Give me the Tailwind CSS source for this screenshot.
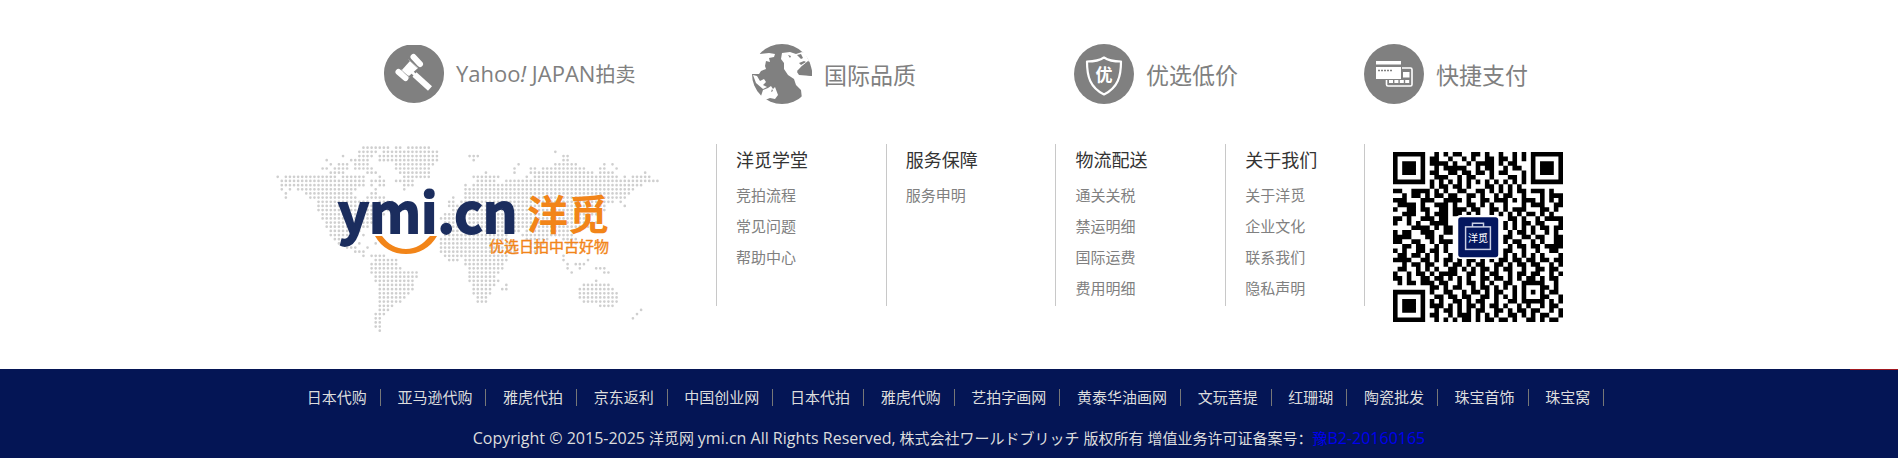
<!DOCTYPE html>
<html lang="zh-CN">
<head>
<meta charset="utf-8">
<title>ymi.cn 洋觅</title>
<script src="https://cdn.jsdelivr.net/npm/@tailwindcss/browser@4"></script>
</head>
<body class="min-h-screen bg-white font-['Open_Sans','Noto_Sans_CJK_SC',sans-serif] text-[15px]">
<footer class="flex min-h-screen flex-col">

  <ul class="mx-auto grid w-full max-w-[1350px] grid-cols-[368fr_322fr_290fr_260fr] pt-11 pl-[110px] text-[23px] leading-[30px] text-[#808080]">
    <li class="flex items-center gap-3">
      <svg class="size-[60px] shrink-0" viewBox="0 0 60 60" aria-hidden="true">
        <path d="M23 1h14A30 29 0 0 1 60 30 30 29 0 0 1 30 59 30 29 0 0 1 0 30 30 29 0 0 1 23 1z" fill="#808080"/>
        <path d="M26 17l8 7-9 8-8-5z" fill="#fff"/>
        <path d="M29.500 13l6.500 7M14.500 28l7 6" stroke="#fff" stroke-width="6" stroke-linecap="round"/>
        <path d="M27 27l4.500 4.500" stroke="#fff" stroke-width="3"/>
        <path d="M30.500 30.500L46 44.500" stroke="#fff" stroke-width="6"/>
        <path d="M24.500 15.500l8.500 8M17 25.500l8.500 8" stroke="#b5b5b5" stroke-width=".8"/>
      </svg>
      <span class="text-xl leading-[30px]"><span class="text-[22px]">Yahoo<i>!</i> JAPAN</span>拍卖</span>
    </li>
    <li class="flex items-center gap-3">
      <svg class="size-[60px] shrink-0" viewBox="0 0 60 60" aria-hidden="true">
        <circle cx="30" cy="30" r="30" fill="#808080"/>
        <path fill="#fff" d="M-1 5L8 10l9-1 6 1-1 3-5 1 1 4-4-1-1 5 1 3-5 2-2 3H0l-2-2z"/>
        <path fill="#fff" d="M30 9l8-1 6 2 6-2 3 1 4 8-7 5-5 6 2 3 13 1 1 8-5 12-6 3-1-9-5-5-2-6-6-4-4-6v-6l-3-4z"/>
        <path fill="#808080" d="M56 17l4 10v5l-11-2-4-3 4-4z"/>
        <path fill="#fff" d="M1 31l4 1 3 5 4-2 2 3-3 3 4 2-4 2-7-6zM9 52l2-6 5-2 3-2 2 3 2-2 3 8-3 4-5-1-5 2-4 3z"/>
        <path fill="#808080" d="M45 11l4-1 2 4-2 1zM47 19l5-2 2 1-5 3zM36 11l3 1-1 2zM20 45l1 2-2 1z"/>
      </svg>
      <span class="pt-0.5">国际品质</span>
    </li>
    <li class="flex items-center gap-3">
      <svg class="size-[60px] shrink-0" viewBox="0 0 60 60" aria-hidden="true">
        <circle cx="30" cy="30" r="30" fill="#808080"/>
        <path d="M30 13.500c-5 3.500-11 4-17 4 0 15 3 26 17 33 14-7 17-18 17-33-6 0-12-.5-17-4z" fill="none" stroke="#fff" stroke-width="2.200" stroke-linejoin="round"/>
        <text x="21.500" y="36.500" font-size="17" font-weight="700" fill="#fff" font-family="Noto Sans CJK SC">优</text>
      </svg>
      <span class="pt-0.5">优选低价</span>
    </li>
    <li class="flex items-center gap-3">
      <svg class="size-[60px] shrink-0" viewBox="0 0 60 60" aria-hidden="true">
        <circle cx="30" cy="30" r="30" fill="#808080"/>
        <rect x="22.500" y="24" width="25.500" height="18" rx="1.500" fill="none" stroke="#fff" stroke-width="1.600"/>
        <rect x="39" y="28" width="6.500" height="5.500" fill="#fff"/>
        <path d="M25 37.500h21" stroke="#fff" stroke-width="3" stroke-dasharray="4 1.400"/>
        <path d="M11 16h27v20H11z" fill="#808080"/>
        <path d="M12 17h25v3.500H12zM12 23h25v12H12z" fill="#fff"/>
        <path d="M14 26.500h14" stroke="#808080" stroke-width="1.400" stroke-dasharray="2 1"/>
      </svg>
      <span class="pt-0.5">快捷支付</span>
    </li>
  </ul>

  <div class="mx-auto mt-10 mb-8 grid w-full max-w-[1350px] grid-cols-[442fr_649fr_259fr] items-start">
    <div>
      <svg class="w-full max-w-[386px]" viewBox="0 0 386 193" role="img" aria-label="ymi.cn 洋觅 优选日拍中古好物">
        <g transform="translate(3.700 3.700) scale(4.083 4.160)">
          <path id="worldDots" fill="none" stroke="#cfcfcf" stroke-width=".66" stroke-linecap="round" stroke-dasharray="0 1"/>
        </g>
        <g font-family="Noto Sans CJK SC" font-weight="700">
          <text x="64" y="89" font-size="54" fill="#1b2d5e" stroke="#1b2d5e" stroke-width="1.800">ymi.cn</text>
          <text x="253" y="86" font-size="41" fill="#f28519">洋觅</text>
          <text x="215" y="108" font-size="15" fill="#f28519" font-weight="400" stroke="#f28519" stroke-width=".4">优选日拍中古好物</text>
        </g>
        <path d="M101 92h7c6 8 14 13 24 13s17-5 24-13h7c-7 12-18 18-31 18s-24-6-31-18z" fill="#f28519"/>
      </svg>
    </div>

    <nav class="grid grid-cols-[170fr_170fr_170fr_139fr] border-r border-[#c8c8c8] leading-[31px] text-[#808080]" aria-label="帮助">
      <section class="border-l border-[#c8c8c8] pb-0.5 pl-[19px]">
        <h2 class="mb-1 text-lg leading-8 text-[#333]">洋觅学堂</h2>
        <ul><li><a href="#">竞拍流程</a></li><li><a href="#">常见问题</a></li><li><a href="#">帮助中心</a></li></ul>
      </section>
      <section class="border-l border-[#c8c8c8] pb-0.5 pl-[19px]">
        <h2 class="mb-1 text-lg leading-8 text-[#333]">服务保障</h2>
        <ul><li><a href="#">服务申明</a></li></ul>
      </section>
      <section class="border-l border-[#c8c8c8] pb-0.5 pl-[19px]">
        <h2 class="mb-1 text-lg leading-8 text-[#333]">物流配送</h2>
        <ul><li><a href="#">通关关税</a></li><li><a href="#">禁运明细</a></li><li><a href="#">国际运费</a></li><li><a href="#">费用明细</a></li></ul>
      </section>
      <section class="border-l border-[#c8c8c8] pb-0.5 pl-[19px]">
        <h2 class="mb-1 text-lg leading-8 text-[#333]">关于我们</h2>
        <ul><li><a href="#">关于洋觅</a></li><li><a href="#">企业文化</a></li><li><a href="#">联系我们</a></li><li><a href="#">隐私声明</a></li></ul>
      </section>
    </nav>

    <div class="pt-2 pl-7">
      <svg class="w-full max-w-[170px]" viewBox="0 0 37 37" role="img" aria-label="洋觅二维码">
        <path id="qrModules" fill="#000"/>
        <rect x="13.700" y="13.700" width="9.600" height="9.600" rx="1" fill="#fff"/>
        <rect x="14.200" y="14.200" width="8.700" height="8.700" rx=".6" fill="#04175f"/>
        <g fill="none" stroke="#c9cfe4" stroke-width=".32">
          <rect x="15.800" y="16.300" width="5.400" height="4.900"/>
          <path d="M17.300 16.300v-.8h2.400v.8"/>
        </g>
        <text x="16.300" y="19.600" font-size="2.200" fill="#fff" font-family="Noto Sans CJK SC">洋觅</text>
      </svg>
    </div>
  </div>

  <div class="relative mt-auto bg-[#041555] pt-5 pb-2 text-center text-[#ddd]">
    <span class="absolute top-0 right-0 h-px w-12 bg-[#a01820]"></span>
    <ul class="px-4 text-sm leading-[17px] [&>li]:inline-block [&>li]:border-r [&>li]:border-[#777] [&>li]:px-[13px] [&>li]:text-[15px] [&>li]:leading-[17px]">
      <li><a href="#">日本代购</a></li>
      <li><a href="#">亚马逊代购</a></li>
      <li><a href="#">雅虎代拍</a></li>
      <li><a href="#">京东返利</a></li>
      <li><a href="#">中国创业网</a></li>
      <li><a href="#">日本代拍</a></li>
      <li><a href="#">雅虎代购</a></li>
      <li><a href="#">艺拍字画网</a></li>
      <li><a href="#">黄泰华油画网</a></li>
      <li><a href="#">文玩菩提</a></li>
      <li><a href="#">红珊瑚</a></li>
      <li><a href="#">陶瓷批发</a></li>
      <li><a href="#">珠宝首饰</a></li>
      <li><a href="#">珠宝窝</a></li>
    </ul>
    <p class="mt-5 leading-6"><span class="text-base">Copyright © 2015-2025</span> 洋觅网 <span class="text-base">ymi.cn All Rights Reserved,</span> 株式会社ワールドブリッチ 版权所有 增值业务许可证备案号：<a href="#" class="text-[#0000ee]">豫<span class="text-base">B2-20160165</span></a></p>
  </div>
</footer>

<script>
  // Dotted world map: one entry per row, each a list of column runs.
  const world = [
    "21-27,29-30,32-37", "20-24,26-39,68", "16,20-23,25-39,47-49,70-71", "12,18-22,25-39,48,70-71",
    "13,15-17,19-22,29-38,59,68-73,80,82", "11-12,14-17,19-23,29-37,58,62-63,65-75,79-80,83",
    "13-16,22-24,30-37,51,58,62-77,79-82,90", "0,2-14,16-21,25,31-37,48-54,61,63-83,85,87-91",
    "1-21,23-26,29-33,49-53,56-93", "1-21,23,25-26,31-33,46,48-89", "1,3,5-19,24,31,46-87",
    "2,7-18,23-24,46-86", "2,8-19,22-26,43,46-85", "10-22,25-28,42-43,45-82,84", "10-28,42-80,85",
    "10-27,43-80", "11-26,41-79", "11-25,40-44,47-76", "12-23,41-43,46-78", "12-22,41-76",
    "13-20,42-59,61-74", "13-17,21,41-56,60-72", "14-17,40-56,61-66,70-73", "15-17,20,24,40-57,62-65,71-73",
    "17-19,22,40-58,62-64,71", "19-21,40-58,62-63", "21,23-26,41-56,70", "24-29,42-44,46-56,70,76",
    "23-29,46-55,71,73-75", "23-30,47-55,71,74,78-80", "23-34,47-54,72,80-81", "24-34,47-53",
    "24-33,47-54,78", "25-33,48-53,56,75-81", "25-33,48-52,55-56,74-82", "25-32,48-52,74-83",
    "25-31,49-51,74-83", "25-30,49-51,75-83", "25-28,79-82", "25-27,89", "24-26,88", "24-25,87",
    "24-25", "24-25", "25"
  ];
  document.getElementById("worldDots").setAttribute("d", world.map((row, y) =>
    row.split(",").map(run => {
      const [a, b = a] = run.split("-").map(Number);
      return `M${a} ${y}h${b - a + 0.1}`;
    }).join("")).join(""));

  // QR modules, "#" is dark.
  const qr = [
    "#######..#.#.##..##.#..#..#.#.#######",
    "#.....#.##..#..#.#..##.##.#.#.#.....#",
    "#.###.#.####.#..#.####.#.##...#.###.#",
    "#.###.#..#.#####..#.##..#.##..#.###.#",
    "#.###.#.##..##.##.##.#.##...#.#.###.#",
    "#.....#..###..#.##...#...##.#.#.....#",
    "#######.#.#.#.#.#.#.#.#.#.#.#.#######",
    "........#.##.##.#...##.#.#.#.........",
    "##..####.#.#..##..##.#.#.#.##.###.#..",
    "..#.##.#.##.##..##.#..#.##..#...#.###",
    "###...###..####.#..##.###.#.###.#.#.#",
    ".####.#..###.#..##.#.#..#...#.###..##",
    "#..##.##..##.###.##..##.#.###...##.#.",
    "..###..#.###.##.#.#..#.#.#.#.##.#.#..",
    "##.#..###.##.............##.#..#.####",
    "#..#.#..####............#.#.##.##...#",
    "....####.#.##...........#.#.#.#.##.##",
    "#.##..###..##............#.##.#..#.#.",
    "####...##.#.............##..##.##..##",
    "##..##..#.###...........#.##..#.#..##",
    "..##.##..#.#.............#.##.##.####",
    "#.#..##.##.#............##..#..#..##.",
    ".##.##.#.#..#...........#.#.#.#.#...#",
    "####..##.#.##.#.##.#.#.##.##.##.##.##",
    "..#.##.##..#.##.#.##..##.#.##.##..#.#",
    ".##..#.#.#..##.#.#.##.#.##..#..##.##.",
    "#..#.##.#.####..##.#.##..#.##.##..#.#",
    "##.#..##.##.#.#.#..##.##.#.#.##.#.##.",
    ".#.##.###.##..#.##.#.#..##..#####..#.",
    "........##.#.##..#.##.#.#.#.#...##.#.",
    "#######.#..##..#.##.#.##..#.#.#.#.##.",
    "#.....#..##.##.##..##.#.#.#.#...##..#",
    "#.###.#.#.#..##.#.##..#..##.#####.#.#",
    "#.###.#.###.#.#.##.#.##.#..#.#..#.##.",
    "#.###.#..#.##.#.#.##..##.#.##.##..#.#",
    "#.....#.##..#.###.#.#.#..##.#.#.##..#",
    "#######..#.#.#.##.#.##.##.#..##.#.##."
  ];
  document.getElementById("qrModules").setAttribute("d", qr.map((row, y) =>
    [...row.matchAll(/#+/g)].map(m => `M${m.index} ${y}h${m[0].length}v1h-${m[0].length}z`).join("")).join(""));
</script>
</body>
</html>
